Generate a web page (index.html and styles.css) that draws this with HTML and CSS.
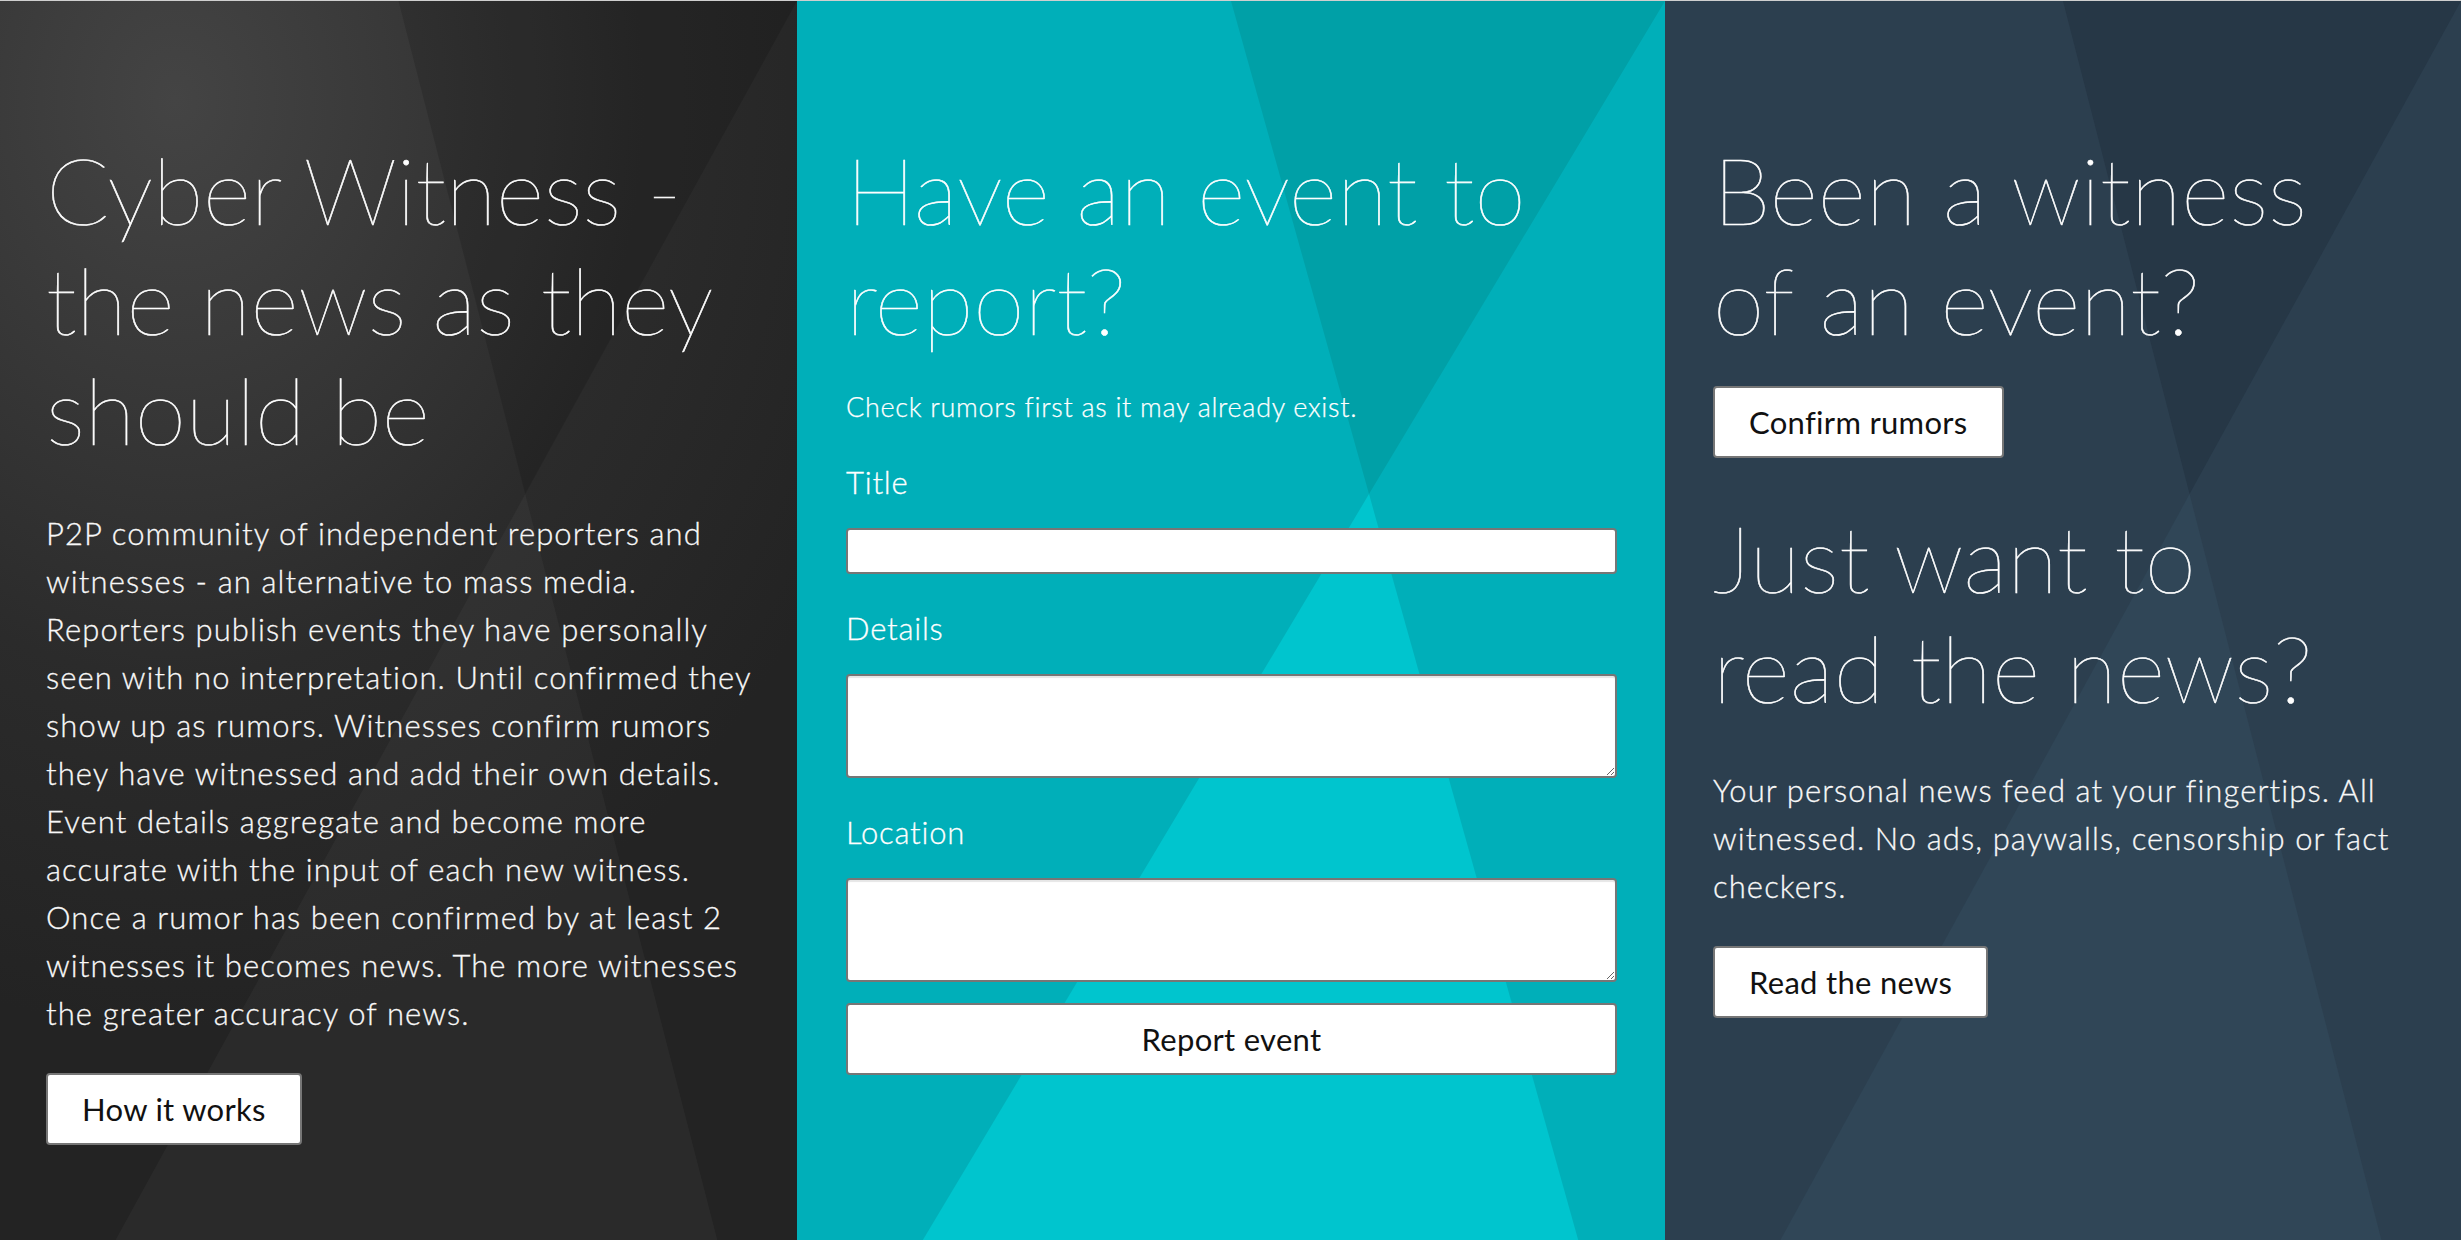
FILE: index.html
```html
<!DOCTYPE html>
<html lang="en">
<head>
<meta charset="utf-8">
<title>Cyber Witness</title>
<link rel="stylesheet" href="styles.css">
</head>
<body>
<main class="panels">
  <section class="panel panel-intro">
    <h1 class="panel-title title-intro">Cyber Witness - the news as they should be</h1>
    <p class="panel-text text-intro">P2P community of independent reporters and witnesses - an alternative to mass media. Reporters publish events they have personally seen with no interpretation. Until confirmed they show up as rumors. Witnesses confirm rumors they have witnessed and add their own details. Event details aggregate and become more accurate with the input of each new witness. Once a rumor has been confirmed by at least 2 witnesses it becomes news. The more witnesses the greater accuracy of news.</p>
    <button class="btn" type="button">How it works</button>
  </section>

  <section class="panel panel-report">
    <h1 class="panel-title">Have an event to report?</h1>
    <p class="panel-note">Check rumors first as it may already exist.</p>
    <form class="report-form">
      <label class="field-label" for="ev-title">Title</label>
      <input class="field-input" id="ev-title" type="text">
      <label class="field-label" for="ev-details">Details</label>
      <textarea class="field-area" id="ev-details"></textarea>
      <label class="field-label" for="ev-location">Location</label>
      <textarea class="field-area" id="ev-location"></textarea>
      <button class="btn btn-block" type="submit">Report event</button>
    </form>
  </section>

  <section class="panel panel-witness">
    <h2 class="panel-title title-witness">Been a witness of an event?</h2>
    <button class="btn btn-confirm" type="button">Confirm rumors</button>
    <h2 class="panel-title title-witness">Just want to read the news?</h2>
    <p class="panel-text text-read">Your personal news feed at your fingertips. All witnessed. No ads, paywalls, censorship or fact checkers.</p>
    <button class="btn" type="button">Read the news</button>
  </section>
</main>
</body>
</html>
```

FILE: styles.css
```css
html, body {
  margin: 0;
  padding: 0;
}

body {
  border-top: 1px solid #cfcfcf;
  background: #2c3f4f;
  font-family: Lato, "Liberation Sans", sans-serif;
  color: #fff;
}

.panels {
  display: grid;
  grid-template-columns: 797px 868px 1fr;
  height: 1239px;
}

.panel {
  position: relative;
  overflow: hidden;
  display: flex;
  flex-direction: column;
  align-items: flex-start;
  padding: 133px 46px 0 46px;
  box-sizing: border-box;
}

.panel::before,
.panel::after {
  content: "";
  position: absolute;
  top: 0;
  left: 0;
  right: 0;
  bottom: 0;
  pointer-events: none;
}

.panel::before {
  clip-path: polygon(50% 0, 100% 0, 65.9% 39.8%);
}

.panel::after {
  clip-path: polygon(65.9% 39.8%, 90% 100%, 14.5% 100%);
}

.panel > * {
  position: relative;
  z-index: 1;
}

/* column colours */
.panel-intro {
  background: radial-gradient(ellipse 95% 75% at 22% 8%, #444444 0%, #393939 28%, #2b2b2b 62%, #232323 100%);
}
.panel-intro::before { background: rgba(0, 0, 0, 0.14); }
.panel-intro::after { background: rgba(255, 255, 255, 0.035); }

.panel-report {
  background: #00afb9;
  padding-left: 49px;
  padding-right: 48px;
}
.panel-report::before { background: #00a0a7; }
.panel-report::after { background: #00c5ce; }

.panel-witness {
  background: #2c3f4f;
  padding-left: 48px;
  padding-right: 48px;
}
.panel-witness::before { background: #263746; }
.panel-witness::after { background: #304657; }

/* typography */
.panel-title {
  margin: 0;
  font-size: 93px;
  line-height: 110px;
  font-weight: 200;
  -webkit-text-stroke: 0.6px #fff;
  color: #fff;
}

.title-intro {
  letter-spacing: -0.3px;
}

.title-witness {
  max-width: 640px;
}

.panel-text {
  margin: 45px 0 36px;
  font-size: 31px;
  line-height: 48px;
  font-weight: 300;
  letter-spacing: 1.1px;
  color: #f8f8f8;
  -webkit-text-stroke: 0.3px #f8f8f8;
}

.text-intro {
  width: 712px;
}

.text-read {
  margin-top: 44px;
}

.panel-note {
  margin: 35px 0 33px;
  font-size: 27px;
  line-height: 36px;
  font-weight: 300;
  letter-spacing: 0.7px;
  -webkit-text-stroke: 0.25px #fff;
}

/* buttons */
.btn {
  font-family: Lato, "Liberation Sans", sans-serif;
  font-size: 31px;
  line-height: 36px;
  font-weight: 400;
  letter-spacing: 0.3px;
  color: #111;
  background: #fff;
  border: 2px solid #767676;
  border-radius: 4px;
  padding: 16px 34px;
  margin: 0;
  cursor: pointer;
}

.btn-confirm {
  margin-top: 32px;
  margin-bottom: 44px;
}

.btn-block {
  align-self: stretch;
  width: 100%;
  margin-top: 21px;
}

/* form */
.report-form {
  align-self: stretch;
  display: flex;
  flex-direction: column;
}

.field-label {
  font-size: 31px;
  line-height: 48px;
  font-weight: 300;
  letter-spacing: 0.8px;
  margin-bottom: 22px;
  -webkit-text-stroke: 0.3px #fff;
}

.field-input,
.field-area {
  box-sizing: border-box;
  width: 100%;
  margin: 0 0 30px;
  background: #fff;
  border: 2px solid #767676;
  border-radius: 4px;
  font-family: Lato, "Liberation Sans", sans-serif;
  font-size: 24px;
}

.field-input {
  height: 46px;
}

.field-area {
  height: 104px;
  resize: both;
  box-shadow: inset 0 2px 1px #e6e6e6;
}

.field-area:last-of-type {
  margin-bottom: 0;
}
```
